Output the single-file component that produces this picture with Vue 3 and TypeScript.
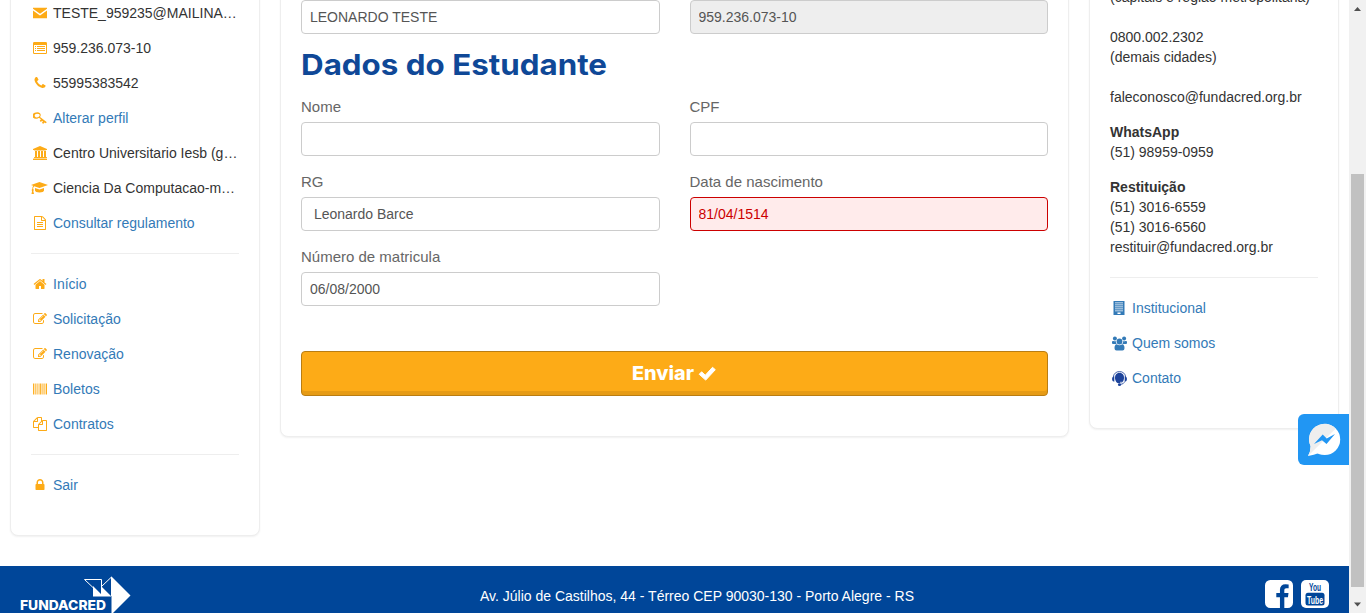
<script setup lang="ts">
import { ref } from 'vue'

interface Item { icon: string; text: string; link?: boolean }

const profile: Item[] = [
  { icon: 'envelope', text: 'TESTE_959235@MAILINA…' },
  { icon: 'list', text: '959.236.073-10' },
  { icon: 'phone', text: '55995383542' },
  { icon: 'key', text: 'Alterar perfil', link: true },
  { icon: 'bank', text: 'Centro Universitario Iesb (g…' },
  { icon: 'cap', text: 'Ciencia Da Computacao-m…' },
  { icon: 'file', text: 'Consultar regulamento', link: true },
]
const menu: Item[] = [
  { icon: 'home', text: 'Início', link: true },
  { icon: 'edit', text: 'Solicitação', link: true },
  { icon: 'edit', text: 'Renovação', link: true },
  { icon: 'barcode', text: 'Boletos', link: true },
  { icon: 'copy', text: 'Contratos', link: true },
]
const session: Item[] = [{ icon: 'lock', text: 'Sair', link: true }]
const groups = [profile, menu, session]
const about: Item[] = [
  { icon: 'building', text: 'Institucional', link: true },
  { icon: 'users', text: 'Quem somos', link: true },
  { icon: 'support', text: 'Contato', link: true },
]

const nome = ref('')
const cpf = ref('')
const rg = ref(' Leonardo Barce')
const nascimento = ref('81/04/1514')
const matricula = ref('06/08/2000')

const icons: Record<string, string> = {
  envelope: 'M0 220h1792v130l-896 640-896-640zM0 560l896 640 896-640v1000h-1792z',
  list: 'M160 128h1472q160 0 160 160v1216q0 160-160 160h-1472q-160 0-160-160v-1216q0-160 160-160zM128 512v960q0 64 64 64h1408q64 0 64-64v-960zM256 640h128v128h-128zM512 640h1024v128h-1024zM256 896h128v128h-128zM512 896h1024v128h-1024zM256 1152h128v128h-128zM512 1152h1024v128h-1024z',
  phone: 'M1600 1240q0 27-10 70.5t-21 68.5q-21 50-122 106-94 51-186 51-27 0-53-3.5t-57.5-12.5-47-14.5-55.5-20.5-49-18q-98-35-175-83-127-79-264-216t-216-264q-48-77-83-175-3-9-18-49t-20.5-55.5-14.5-47-12.5-57.5-3.5-53q0-92 51-186 56-101 106-122 25-11 68.5-21t70.5-10q14 0 21 3 18 6 53 76 11 19 30 54t35 63.5 31 53.5q3 4 17.5 25t21.5 35.5 7 28.5q0 20-28.5 50t-62 55-62 53-28.5 46q0 9 5 22.5t8.5 20.5 14 24 11.5 19q76 137 174 235t235 174q2 1 19 11.5t24 14 20.5 8.5 22.5 5q18 0 46-28.5t53-62 55-62 50-28.5q14 0 28.5 7t35.5 21.5 25 17.5q25 15 53.5 31t63.5 35 54 30q70 35 76 53 3 7 3 21z',
  key: 'M560 150q210 0 330 125t90 310q-15 100-80 180l800 610q60 45 30 95l-60 75q-35 40-85 5l-125-90-105 145q-35 45-80 15l-95-75q-45-35-10-80l100-135-120-90-90 120q-35 45-80 10l-85-65q-45-35-10-80l130-175-260-195q-110 110-320 140-270 20-410-130t-75-360q35-180 260-290 150-70 350-70zM540 340q-190 0-275 120t-10 240 210 120 270-80 125-200-105-150-215-50z',
  bank: 'M896 0l896 384v128h-128q0 26-20.500 45t-48.500 19h-1398q-28 0-48.500-19t-20.500-45h-128v-128zM256 640h256v768h128v-768h256v768h128v-768h256v768h128v-768h256v768h59q28 0 48.500 19t20.500 45v64h-1664v-64q0-26 20.500-45t48.500-19h59zM1723 1600q28 0 48.500 19t20.500 45v128h-1792v-128q0-26 20.500-45t48.500-19z',
  file: 'M1596 380q28 28 48 76t20 88v1152q0 40-28 68t-68 28h-1344q-40 0-68-28t-28-68v-1600q0-40 28-68t68-28h896q40 0 88 20t76 48zm-444-244v376h376q-10-29-22-41l-313-313q-12-12-41-22zm384 1528v-1024h-416q-40 0-68-28t-28-68v-416h-768v1536h1280zm-1024-864q0-14 9-23t23-9h704q14 0 23 9t9 23v64q0 14-9 23t-23 9h-704q-14 0-23-9t-9-23v-64zm736 224q14 0 23 9t9 23v64q0 14-9 23t-23 9h-704q-14 0-23-9t-9-23v-64q0-14 9-23t23-9h704zm0 256q14 0 23 9t9 23v64q0 14-9 23t-23 9h-704q-14 0-23-9t-9-23v-64q0-14 9-23t23-9h704z',
  home: 'M1472 992v480q0 26-19 45t-45 19h-384v-384h-256v384h-384q-26 0-45-19t-19-45v-480q0-1 .5-3t.5-3l575-474 575 474q1 2 1 6zm223-69l-62 74q-8 9-21 11h-3q-13 0-21-7l-692-577-692 577q-12 8-24 7-13-2-21-11l-62-74q-8-10-7-23.500t11-21.500l719-599q32-26 76-26t76 26l244 204v-195q0-14 9-23t23-9h192q14 0 23 9t9 23v408l219 182q10 8 11 21.500t-7 23.500z',
  edit: 'M888 1184l116-116-152-152-116 116v56h96v96h56zm440-720q-16-16-33 1l-350 350q-17 17-1 33t33-1l350-350q17-17 1-33zm80 594v190q0 119-84.5 203.500t-203.500 84.500h-832q-119 0-203.500-84.500t-84.500-203.500v-832q0-119 84.500-203.500t203.500-84.500h832q63 0 117 25 15 7 18 23 3 17-9 29l-49 49q-14 14-32 8-23-6-45-6h-832q-66 0-113 47t-47 113v832q0 66 47 113t113 47h832q66 0 113-47t47-113v-126q0-13 9-22l64-64q15-15 35-7t20 29zm-96-738l288 288-672 672h-288v-288zm444 132l-92 92-288-288 92-92q28-28 68-28t68 28l152 152q28 28 28 68t-28 68z',
  barcode: 'M0 192h120v1408h-120zM190 192h40v1408h-40zM300 192h90v1408h-90zM470 192h40v1408h-40zM570 192h110v1408h-110zM760 192h60v1408h-60zM890 192h120v1408h-120zM1090 192h50v1408h-50zM1210 192h110v1408h-110zM1390 192h90v1408h-90zM1550 192h40v1408h-40zM1660 192h132v1408h-132z',
  copy: 'M1696 384q40 0 68 28t28 68v1216q0 40-28 68t-68 28h-960q-40 0-68-28t-28-68v-288h-544q-40 0-68-28t-28-68v-672q0-40 20-88t48-76l408-408q28-28 76-48t88-20h416q40 0 68 28t28 68v328q68-40 128-40h416zm-544 213l-299 299h299v-299zm-640-384l-299 299h299v-299zm196 647l316-316v-416h-384v416q0 40-28 68t-68 28h-416v640h512v-256q0-40 20-88t48-76zm956 804v-1152h-384v416q0 40-28 68t-68 28h-416v640h896z',
  lock: 'M640 768h512v-192q0-106-75-181t-181-75-181 75-75 181v192zm832 96v576q0 40-28 68t-68 28h-960q-40 0-68-28t-28-68v-576q0-40 28-68t68-28h32v-192q0-184 132-316t316-132 316 132 132 316v192h32q40 0 68 28t28 68z',
  building: 'M192 0h1408v1792h-1408zM384 192v110h1024v-110zM384 448v110h1024v-110zM384 704v110h1024v-110zM384 960v110h1024v-110zM384 1216v110h1024v-110zM700 1480v190h392v-190z',
}
</script>

<template>
  <div class="screen">
    <div class="page">
      <main class="columns">
        <aside class="card left">
          <ul v-for="(group, g) in groups" :key="g" class="list">
            <li v-for="item in group" :key="item.text" class="item" :class="{ link: item.link }">
              <svg v-if="item.icon === 'cap'" class="icon wide" viewBox="0 0 17 14">
                <path d="M8.500 1 17 4 8.500 7 3.200 5.200C2.300 6 2.200 7 2.200 8.100c.8.600.7 1.500.1 1.900L3 13H.5l.6-3C.5 9.500.6 8.600 1.300 8.100c0-1.200.2-2.300.9-3.300L0 4zM4 6.900l4.500 1.600L13 6.900v2.500c0 1-2 2-4.500 2S4 10.400 4 9.400z" />
              </svg>
              <svg v-else class="icon" viewBox="0 0 1792 1792"><path fill-rule="evenodd" :d="icons[item.icon]" /></svg>
              <span class="label">{{ item.text }}</span>
            </li>
          </ul>
        </aside>

        <section class="card form">
          <div class="grid">
            <input class="input" value="LEONARDO TESTE" />
            <input class="input disabled" value="959.236.073-10" readonly />
          </div>
          <h2 class="title">
            <svg width="310" height="40"><text x="0" y="31" textLength="306" lengthAdjust="spacingAndGlyphs">Dados do Estudante</text></svg>
          </h2>
          <div class="grid fields">
            <label class="field"><span>Nome</span><input v-model="nome" class="input" /></label>
            <label class="field"><span>CPF</span><input v-model="cpf" class="input" /></label>
            <label class="field"><span>RG</span><input v-model="rg" class="input" /></label>
            <label class="field"><span>Data de nascimento</span><input v-model="nascimento" class="input error" /></label>
            <label class="field"><span>Número de matricula</span><input v-model="matricula" class="input" /></label>
          </div>
          <button class="send" type="button">
            <svg width="86" height="26">
              <text x="0" y="20" textLength="62" lengthAdjust="spacingAndGlyphs">Enviar</text>
              <path d="M67.200 14.300 69.600 11.800 73.300 15.200 80.500 7.300 83.300 9.700 73.700 20.100Z" stroke="#fff" stroke-width="1" stroke-linejoin="round" />
            </svg>
          </button>
        </section>

        <aside class="card right">
          <p>(capitais e região metropolitana)</p>
          <p class="spaced">0800.002.2302<br />(demais cidades)</p>
          <p class="spaced">faleconosco@fundacred.org.br</p>
          <p class="block"><b>WhatsApp</b><br />(51) 98959-0959</p>
          <p class="block"><b>Restituição</b><br />(51) 3016-6559<br />(51) 3016-6560<br />restituir@fundacred.org.br</p>
          <ul class="list about">
            <li v-for="item in about" :key="item.text" class="item link">
              <svg v-if="item.icon === 'users'" class="icon wide" viewBox="0 0 15 14">
                <circle cx="2.900" cy="2" r="2" /><circle cx="12.100" cy="2" r="2" />
                <path d="M0 7.200V5.500C0 4.600.8 4.200 1.500 4.500q1.200.6 2.300.1Q3.700 6.500 4.700 7.500H1Q0 7.500 0 6.600zM15 7.200V5.500c0-.9-.8-1.300-1.500-1q-1.200.6-2.300.1.100 1.900-.9 2.900H14q1 0 1-.9z" />
                <circle cx="7.500" cy="5" r="2.900" />
                <path d="M4.700 7.700Q7.500 9.700 10.300 7.700 12.500 8 12.500 11.700 12.500 14 10.500 14h-6q-2 0-2-2.300Q2.500 8 4.700 7.700z" />
              </svg>
              <svg v-else-if="item.icon === 'support'" class="icon wide navy" viewBox="0 0 15 15">
                <path d="M1.400 6a6.100 5.500 0 0 1 12.200 0" fill="none" stroke="#1d439b" stroke-width=".8" />
                <path d="M7.500 1.700C10.500 1.700 12 4 12 6.800S10.500 12.500 7.500 12.500 3 9.600 3 6.800 4.500 1.700 7.500 1.700z" />
                <path d="M2.300 5.200v5.600Q0 10.600 0 8t2.300-2.800zM12.700 5.200v5.600Q15 10.600 15 8t-2.300-2.800z" />
                <path d="M12.900 10.500Q12 13 8 13.700" fill="none" stroke="#1d439b" stroke-width=".8" />
                <ellipse cx="7.500" cy="13.700" rx="1.600" ry="1.200" /><path d="M8 11.300h3.500" stroke="#fff" stroke-width=".7" />
              </svg>
              <svg v-else class="icon" viewBox="0 0 1792 1792"><path fill-rule="evenodd" :d="icons[item.icon]" /></svg>
              <span class="label">{{ item.text }}</span>
            </li>
          </ul>
        </aside>
      </main>

      <footer class="footer">
        <svg class="logo" width="112" height="38" viewBox="0 0 112 38">
          <path d="M91.500 1.500 110.500 20.500 91.500 39.500Z" fill="#fff" />
          <path d="M64.500 4.500H81.500V20.500ZM81.500 11.500 91.500 2V21" fill="none" stroke="#fff" stroke-width="1" />
          <path d="M73 11 81.500 19.500V11.500L91.500 21.500H73Z" fill="#fff" />
          <text x="0" y="35" textLength="86" lengthAdjust="spacingAndGlyphs">FUNDACRED</text>
        </svg>
        <address class="address">Av. Júlio de Castilhos, 44 - Térreo CEP 90030-130 - Porto Alegre - RS</address>
        <div class="social">
          <svg width="28" height="28" viewBox="128 128 1536 1536"><path fill="#fff" d="M1376 128q119 0 203.500 84.500t84.500 203.500v960q0 119-84.500 203.500t-203.500 84.500h-188v-595h199l30-232h-229v-148q0-56 23.500-84t91.500-28l122-1v-207q-63-9-178-9-136 0-217.500 80t-81.500 226v171h-200v232h200v595h-532q-119 0-203.500-84.500t-84.500-203.500v-960q0-119 84.500-203.500t203.500-84.500h960z" /></svg>
          <svg class="youtube" width="28" height="28" viewBox="0 0 28 28">
            <rect width="28" height="28" rx="5" fill="#fff" />
            <rect x="4.500" y="12.800" width="19" height="12.700" rx="2.500" fill="#004699" />
            <text x="8" y="11.300" textLength="12" lengthAdjust="spacingAndGlyphs" fill="#004699">You</text>
            <text x="6" y="23.500" textLength="16" lengthAdjust="spacingAndGlyphs" fill="#fff">Tube</text>
          </svg>
        </div>
      </footer>

      <div class="messenger">
        <svg width="51" height="51" viewBox="0 0 51 51">
          <circle cx="26.700" cy="25.500" r="15.500" fill="#fff" />
          <path d="M13 31Q13 37 10 42 16 41 21 39Z" fill="#fff" />
          <path d="M37.700 14.600A15.500 15.500 0 0 0 12.500 32Q12.500 38 10 42Z" fill="#eee" />
          <path d="M16 30 24.700 20.500 28.700 24.500 37 20 28.500 30 24 26.300Z" fill="#2196f3" />
        </svg>
      </div>
    </div>

    <div class="scrollbar">
      <svg width="17" height="17"><path d="M5 11 8.500 7 12 11Z" /></svg>
      <div class="thumb"></div>
      <svg width="17" height="17"><path d="M5 6.500H12L8.500 10.500Z" /></svg>
    </div>
  </div>
</template>

<style>
body { overflow: hidden; background: #fff; }
</style>

<style scoped>
* { box-sizing: border-box; }
.screen {
  display: flex;
  height: 613px;
  overflow: hidden;
  font: 14px/20px "Liberation Sans", Arial, sans-serif;
  color: #333;
}
.page { position: relative; display: flex; flex-direction: column; width: 1349px; height: 613px; overflow: hidden; }
.columns { display: flex; align-items: flex-start; gap: 20px; height: 566px; padding: 0 10px; flex: none; }
.card {
  flex: none;
  margin-top: -30px;
  padding: 0 20px;
  border: 1px solid #eee;
  border-radius: 8px;
  box-shadow: 0 1px 2px rgba(0, 0, 0, 0.06);
  background: #fff;
}
.left { width: 250px; height: 566px; padding-top: 32px; }
.form { width: 789px; height: 467px; padding-top: 29px; }
.right { width: 250px; height: 459px; padding-top: 16px; }
.list { margin: 0; padding: 0; list-style: none; }
.list + .list, .about { margin-top: 20px; padding-top: 20px; border-top: 1px solid #eee; }
.item { display: flex; align-items: center; height: 20px; }
.item + .item { margin-top: 15px; }
.icon { flex: none; width: 14px; height: 14px; margin: 0 6px 0 2px; fill: #fdab17; }
.icon.wide { width: 17px; margin: 0 5px 0 0; }
.label { white-space: nowrap; }
.link { color: #337ab7; }
.about .icon { fill: #337ab7; }
.about .icon.wide { width: 15px; height: 15px; margin: 0 5px 0 2px; }
.about .icon.navy { fill: #1d439b; }
.right p { margin: 0; white-space: nowrap; }
.right .spaced { margin-top: 20px; }
.right .block { margin-top: 15px; }
.grid { display: grid; grid-template-columns: 1fr 1fr; column-gap: 30px; }
.input {
  display: block;
  width: 100%;
  height: 34px;
  padding: 0 8px;
  border: 1px solid #ccc;
  border-radius: 4px;
  outline: 0;
  background: #fff;
  color: #555;
  font: 14px/20px "Liberation Sans", Arial, sans-serif;
}
.disabled { background: #eee; }
.error { border-color: #c00; background: #ffebeb; color: #c00; }
.title { height: 40px; margin: 10px 0 13px; }
.title svg, .send svg, .social svg, .messenger svg { display: block; }
.title text { font: 700 29px Inter, sans-serif; fill: #0f4897; }
.fields { row-gap: 16px; }
.field { display: block; height: 59px; color: #666; font-size: 15px; }
.field span { display: block; height: 25px; line-height: 20px; }
.send {
  display: flex;
  align-items: center;
  justify-content: center;
  width: 100%;
  height: 45px;
  margin: 45px 0 0;
  padding: 0 0 1px;
  border: 1px solid #b97d13;
  border-radius: 4px;
  background: #fdab17;
  box-shadow: inset 0 -4px 0 #e69b15;
}
.send svg { fill: #fff; }
.send text { font: 800 19px Inter, sans-serif; }
.footer { display: flex; align-items: flex-start; flex: none; height: 47px; background: #004699; color: #fff; }
.logo { flex: none; margin: 9px 0 0 20px; }
.logo text { font: 800 13.500px Inter, sans-serif; fill: #fff; }
.address { margin: 20px 0 0 348px; font-style: normal; white-space: nowrap; }
.social { display: flex; gap: 8px; margin: 14px 20px 0 auto; }
.youtube text { font: 700 11.500px "Liberation Sans", sans-serif; }
.messenger { position: absolute; top: 414px; right: 0; width: 51px; height: 51px; border-radius: 6px 0 0 6px; background: #2196f3; }
.scrollbar { display: flex; flex-direction: column; width: 17px; height: 613px; background: #f1f1f1; }
.scrollbar svg { flex: none; fill: #505050; }
.thumb { width: 13px; height: 413px; margin: 157px 2px auto; background: #c1c1c1; flex: none; }
</style>
